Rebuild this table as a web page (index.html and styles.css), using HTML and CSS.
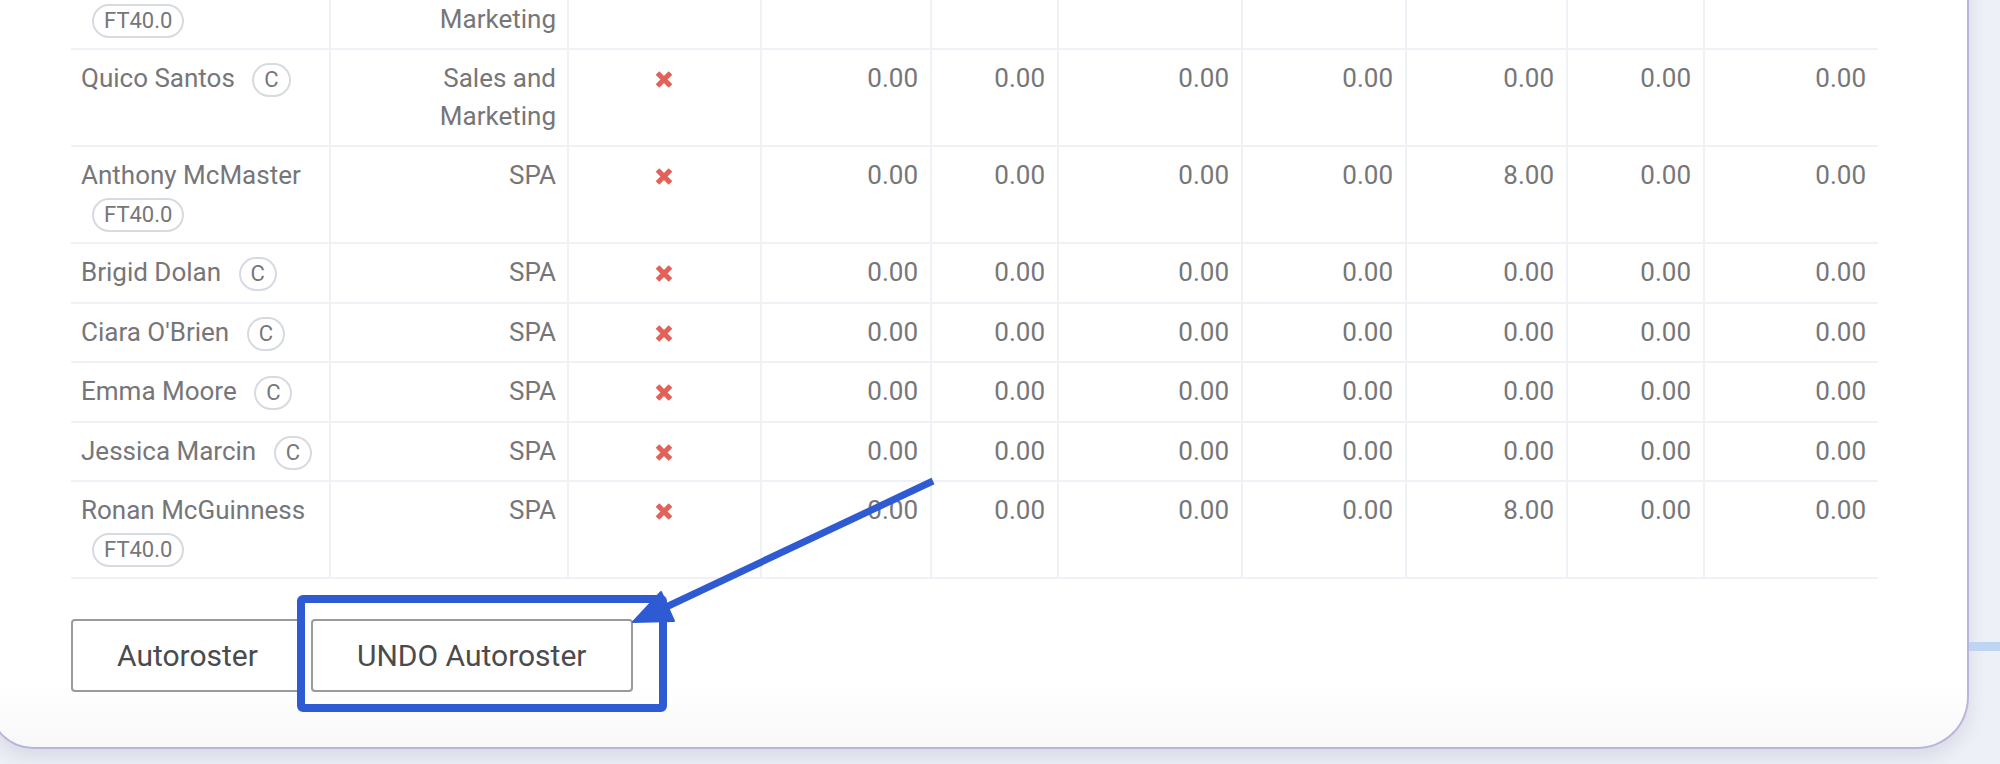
FILE: index.html
```html
<!DOCTYPE html>
<html lang="en">
<head>
    <meta charset="UTF-8">
    <meta name="viewport" content="width=device-width, initial-scale=1.0">
    <title>Autoroster</title>
    <link rel="stylesheet" href="styles.css">
</head>
<body>
    <div class="page">
        <div class="card">
            <table class="roster">
                <colgroup>
                    <col class="w-name">
                    <col class="w-dept">
                    <col class="w-flag">
                    <col class="w-170">
                    <col class="w-127">
                    <col class="w-184">
                    <col class="w-164">
                    <col class="w-161">
                    <col class="w-137">
                    <col class="w-175">
                </colgroup>
                <tbody>
                    <tr>
                        <td class="name">Aoife Brennan <span class="tag">FT40.0</span></td>
                        <td class="dept">Sales and Marketing</td>
                        <td class="flag"><svg class="cross" viewBox="0 0 18 17"><path d="M2.5 2 L15.5 15 M15.5 2 L2.5 15"/></svg></td>
                        <td>0.00</td><td>0.00</td><td>0.00</td><td>0.00</td><td>0.00</td><td>0.00</td><td>0.00</td>
                    </tr>
                    <tr>
                        <td class="name">Quico Santos <span class="tag">C</span></td>
                        <td class="dept">Sales and Marketing</td>
                        <td class="flag"><svg class="cross" viewBox="0 0 18 17"><path d="M2.5 2 L15.5 15 M15.5 2 L2.5 15"/></svg></td>
                        <td>0.00</td><td>0.00</td><td>0.00</td><td>0.00</td><td>0.00</td><td>0.00</td><td>0.00</td>
                    </tr>
                    <tr>
                        <td class="name">Anthony McMaster <span class="tag">FT40.0</span></td>
                        <td class="dept">SPA</td>
                        <td class="flag"><svg class="cross" viewBox="0 0 18 17"><path d="M2.5 2 L15.5 15 M15.5 2 L2.5 15"/></svg></td>
                        <td>0.00</td><td>0.00</td><td>0.00</td><td>0.00</td><td>8.00</td><td>0.00</td><td>0.00</td>
                    </tr>
                    <tr>
                        <td class="name">Brigid Dolan <span class="tag">C</span></td>
                        <td class="dept">SPA</td>
                        <td class="flag"><svg class="cross" viewBox="0 0 18 17"><path d="M2.5 2 L15.5 15 M15.5 2 L2.5 15"/></svg></td>
                        <td>0.00</td><td>0.00</td><td>0.00</td><td>0.00</td><td>0.00</td><td>0.00</td><td>0.00</td>
                    </tr>
                    <tr>
                        <td class="name">Ciara O'Brien <span class="tag">C</span></td>
                        <td class="dept">SPA</td>
                        <td class="flag"><svg class="cross" viewBox="0 0 18 17"><path d="M2.5 2 L15.5 15 M15.5 2 L2.5 15"/></svg></td>
                        <td>0.00</td><td>0.00</td><td>0.00</td><td>0.00</td><td>0.00</td><td>0.00</td><td>0.00</td>
                    </tr>
                    <tr>
                        <td class="name">Emma Moore <span class="tag">C</span></td>
                        <td class="dept">SPA</td>
                        <td class="flag"><svg class="cross" viewBox="0 0 18 17"><path d="M2.5 2 L15.5 15 M15.5 2 L2.5 15"/></svg></td>
                        <td>0.00</td><td>0.00</td><td>0.00</td><td>0.00</td><td>0.00</td><td>0.00</td><td>0.00</td>
                    </tr>
                    <tr>
                        <td class="name">Jessica Marcin <span class="tag">C</span></td>
                        <td class="dept">SPA</td>
                        <td class="flag"><svg class="cross" viewBox="0 0 18 17"><path d="M2.5 2 L15.5 15 M15.5 2 L2.5 15"/></svg></td>
                        <td>0.00</td><td>0.00</td><td>0.00</td><td>0.00</td><td>0.00</td><td>0.00</td><td>0.00</td>
                    </tr>
                    <tr>
                        <td class="name">Ronan McGuinness <span class="tag">FT40.0</span></td>
                        <td class="dept">SPA</td>
                        <td class="flag"><svg class="cross" viewBox="0 0 18 17"><path d="M2.5 2 L15.5 15 M15.5 2 L2.5 15"/></svg></td>
                        <td>0.00</td><td>0.00</td><td>0.00</td><td>0.00</td><td>8.00</td><td>0.00</td><td>0.00</td>
                    </tr>
                </tbody>
            </table>

            <div class="actions">
                <button class="btn">Autoroster</button>
                <button class="btn">UNDO Autoroster</button>
            </div>
        </div>

        <div class="side">
            <div class="side-bar"></div>
        </div>
    </div>

    <!-- annotation drawn over the screenshot -->
    <svg class="annotation" viewBox="0 0 2000 764">
        <rect x="301" y="599" width="362" height="109" rx="2"/>
        <line x1="933" y1="481" x2="664" y2="608"/>
        <polygon points="633,622 661,592 674,621"/>
    </svg>
</body>
</html>
```

FILE: styles.css
```css
body {
    margin: 0;
    height: 764px;
    overflow: hidden;
    position: relative;
    background-color: #eef0f7;
    font-family: Roboto, "Liberation Sans", sans-serif;
    color: #767679;
}
.page {
    display: flex;
    align-items: flex-start;
}
.card {
    flex: none;
    box-sizing: border-box;
    width: 1980px;
    margin-left: -11px;
    margin-top: -47px;
    padding: 0 89px 55px 80px;
    background: linear-gradient(#fff 92%, #f8f8f9);
    border: 2px solid #b9b4dc;
    border-top: none;
    border-radius: 0 0 52px 44px;
    box-shadow: 0 8px 18px rgba(70, 72, 110, 0.13);
}
.side {
    flex: 1;
}
.side-bar {
    margin-top: 642px;
    height: 9px;
    background-color: #bdd5f2;
}

/* table */
.roster {
    table-layout: fixed;
    width: 1807px;
    border-collapse: separate;
    border-spacing: 0;
    font-size: 26px;
    line-height: 37.5px;
}
.w-name { width: 258px; }
.w-dept { width: 238px; }
.w-flag { width: 193px; }
.w-170 { width: 170px; }
.w-127 { width: 127px; }
.w-184 { width: 184px; }
.w-164 { width: 164px; }
.w-161 { width: 161px; }
.w-137 { width: 137px; }
.w-175 { width: 175px; }
.roster td {
    vertical-align: top;
    text-align: right;
    padding: 10px 12px 10px 10px;
    border-bottom: 2px solid #eef1f5;
    border-left: 2px solid #eef1f5;
}
.roster td.name {
    text-align: left;
    border-left: none;
}
.roster td.dept {
    padding-right: 11px;
}
.roster td.flag {
    text-align: center;
}
.cross {
    width: 18px;
    height: 17px;
    vertical-align: -1px;
    fill: none;
    stroke: #e2625a;
    stroke-width: 5.2;
}
.tag {
    display: inline-block;
    margin-left: 11px;
    padding: 2px 10px;
    font-size: 22px;
    line-height: 26px;
    border: 2px solid #d6dbe1;
    border-radius: 20px;
}

/* buttons */
.actions {
    display: flex;
    gap: 7px;
    margin-top: 40px;
}
.btn {
    padding: 17px 44px;
    font-family: Roboto, "Liberation Sans", sans-serif;
    font-size: 30px;
    line-height: 35px;
    color: #4b4b4d;
    background: white;
    border: 2px solid #9a9a9a;
    border-radius: 4px;
    cursor: pointer;
}

.annotation {
    position: absolute;
    top: 0;
    left: 0;
    width: 2000px;
    height: 764px;
    pointer-events: none;
}
.annotation rect,
.annotation line {
    fill: none;
    stroke: #2e5bd4;
    stroke-width: 8;
}
.annotation line {
    stroke-width: 7;
}
.annotation polygon {
    fill: #2e5bd4;
    stroke: #2e5bd4;
    stroke-width: 2;
    stroke-linejoin: round;
}
```
